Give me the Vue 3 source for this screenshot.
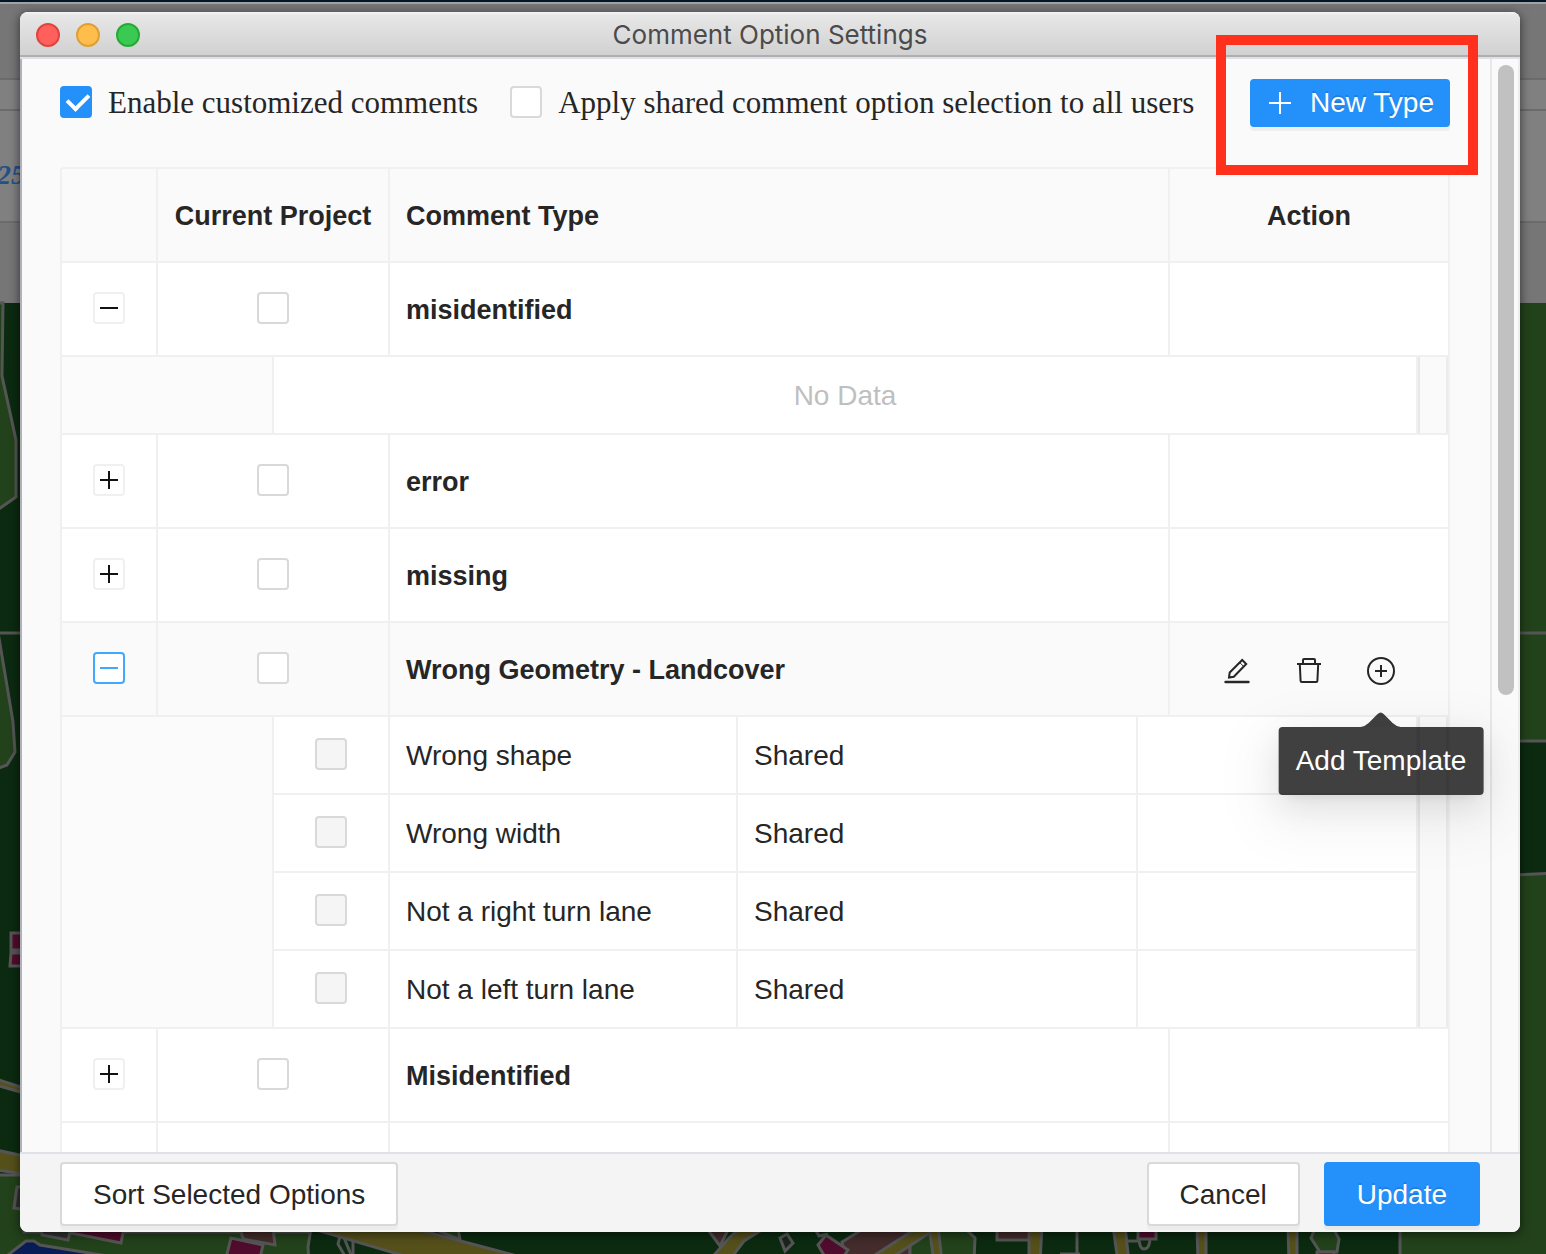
<script setup>
import { ref } from 'vue'

const enableCustom = ref(true)
const applyShared = ref(false)

const types = ref([
  { id: 1, name: 'misidentified', open: true, checked: false, templates: [] },
  { id: 2, name: 'error', open: false, checked: false, templates: [] },
  { id: 3, name: 'missing', open: false, checked: false, templates: [] },
  {
    id: 4,
    name: 'Wrong Geometry - Landcover',
    open: true,
    checked: false,
    active: true,
    templates: [
      { name: 'Wrong shape', scope: 'Shared' },
      { name: 'Wrong width', scope: 'Shared' },
      { name: 'Not a right turn lane', scope: 'Shared' },
      { name: 'Not a left turn lane', scope: 'Shared' }
    ]
  },
  { id: 5, name: 'Misidentified', open: false, checked: false, templates: [] },
  { id: 6, name: '', open: false, checked: false, templates: [] }
])
</script>

<template>
  <div class="desktop">
    <svg class="backdrop" viewBox="0 0 1546 1254" preserveAspectRatio="none" aria-hidden="true">
      <rect width="1546" height="1254" fill="#0b2a10" />
      <rect width="1546" height="303" fill="#767676" />
      <rect y="79" width="1546" height="143" fill="#808080" />
      <path d="M0 79h1546M0 110h1546M0 222h1546" stroke="#6b6b6b" stroke-width="2" />
      <rect width="1546" height="2" fill="#02152b" />
      <rect y="2" width="1546" height="2" fill="#a2a2a2" />
      <text x="-3" y="184" class="backdrop-text">25</text>
      <g stroke="#555" stroke-width="3">
        <path d="M-4 303H3L2 376L16 440V497L-4 511Z" fill="#22421b" />
        <path d="M-4 633H24" />
        <path d="M-4 620L13 722L15 752L7 765L-4 769Z" fill="#22421b" />
        <path d="M11 933H24V950H11ZM11 953H24V966H10Z" fill="#500c2c" />
        <path d="M-4 1079L24 1088V1093L-4 1085Z" fill="#55501a" />
        <path d="M-4 1150L24 1156V1174L-4 1170Z" fill="#55501a" />
        <path d="M-4 1175H24V1232H325L308 1262H-4Z" fill="#22421b" />
        <path d="M17 1187H26V1210L14 1208Z" fill="#303030" />
        <path d="M4 1258L26 1241H34L40 1245L120 1258Z" fill="#081d55" />
        <path d="M41 1228H71L68 1240L42 1235Z" fill="#303030" />
        <path d="M70 1228H124L121 1243L71 1233Z" fill="#500c2c" />
        <path d="M240 1228H273L275 1245L243 1239Z" fill="#432c2b" />
        <path d="M231 1238L263 1245L260 1258H226Z" fill="#500c2c" />
        <path d="M311 1228H340L354 1262H309L308 1247Z" fill="#0b2a10" />
        <path d="M340 1236L338 1244L346 1258M353 1240V1258M398 1252V1262" fill="none" />
        <path d="M432 1228H458L460 1240Z" fill="#22421b" />
        <path d="M310 1228L425 1262H540L412 1228Z" fill="#55501a" />
        <path d="M705 1226H730L720 1246Z" fill="#432c2b" />
        <path d="M729 1238L742 1226H768L744 1241L728 1262H708Z" fill="#55501a" />
        <path d="M780 1238L787 1234L793 1243L785 1251Z" fill="#1c2420" />
        <path d="M815 1229L819 1236L828 1234" fill="none" />
        <path d="M842 1242L868 1226H910V1262H846Z" fill="#432c2b" />
        <path d="M910 1226H962L975 1238L974 1262H910Z" fill="#22421b" />
        <path d="M818 1245L826 1235L848 1250L840 1262H828Z" fill="#500c2c" />
        <path d="M864 1262L920 1226H940L885 1262Z" fill="#55501a" />
        <path d="M929 1226H938L942 1262H934Z" fill="#55501a" />
        <path d="M997 1226H1030V1240H997Z" fill="#432c2b" />
        <path d="M1029 1226H1042L1040 1262H1029Z" fill="#55501a" />
        <path d="M1077 1226V1254M1060 1254H1080M1125 1241H1138M1139 1240Q1140 1249 1144 1249Q1149 1249 1150 1240" fill="none" />
        <path d="M1113 1226H1125L1129 1262H1118Z" fill="#55501a" />
        <path d="M1138 1226H1156V1239H1138Z" fill="#500c2c" />
        <path d="M1197 1226H1206V1262H1198Z" fill="#55501a" />
        <path d="M1288 1226H1297V1262H1289Z" fill="#55501a" />
        <path d="M1316 1226H1332L1339 1239L1337 1252H1320L1311 1238Z" fill="#22421b" />
        <path d="M1317 1252H1334V1262H1317Z" fill="#500c2c" />
        <path d="M1514 303H1554V741H1514Z" fill="#22421b" stroke="none" />
        <path d="M1514 633H1554M1514 741H1554" />
        <path d="M1400 1262V1226L1514 875L1554 873V1262Z" fill="#22421b" />
      </g>
    </svg>

    <section class="window" role="dialog" aria-labelledby="window-title">
      <header class="titlebar">
        <div class="lights">
          <button class="light close" type="button" aria-label="Close"></button>
          <button class="light minimize" type="button" aria-label="Minimize"></button>
          <button class="light zoom" type="button" aria-label="Zoom"></button>
        </div>
        <h1 id="window-title" class="title">Comment Option Settings</h1>
      </header>

      <div class="body">
        <main class="content">
          <div class="toolbar">
            <label class="option" for="enable">
              <input id="enable" v-model="enableCustom" class="check" type="checkbox" />
              <span>Enable customized comments</span>
            </label>
            <label class="option" for="apply">
              <input id="apply" v-model="applyShared" class="check" type="checkbox" />
              <span>Apply shared comment option selection to all users</span>
            </label>
            <button class="btn primary new-type" type="button">
              <svg width="28" height="28" viewBox="0 0 28 28" aria-hidden="true">
                <path d="M14 3v22M3 14h22" stroke="#fff" stroke-width="2" />
              </svg>
              <span>New Type</span>
            </button>
          </div>

          <table class="grid">
            <colgroup>
              <col class="col-expand" />
              <col class="col-project" />
              <col />
              <col class="col-action" />
            </colgroup>
            <thead>
              <tr>
                <th></th>
                <th class="center">Current Project</th>
                <th>Comment Type</th>
                <th class="center">Action</th>
              </tr>
            </thead>
            <tbody>
              <template v-for="t in types" :key="t.id">
                <tr :class="{ active: t.active }">
                  <td class="center">
                    <button
                      class="expander"
                      type="button"
                      :aria-expanded="t.open"
                      :aria-label="t.open ? 'Collapse' : 'Expand'"
                      @click="t.open = !t.open"
                    >
                      <svg width="28" height="28" viewBox="0 0 28 28" aria-hidden="true">
                        <path :d="t.open ? 'M5 14h18' : 'M5 14h18M14 5v18'" stroke="currentColor" stroke-width="2" />
                      </svg>
                    </button>
                  </td>
                  <td class="center">
                    <input v-model="t.checked" class="check" type="checkbox" :aria-label="t.name" />
                  </td>
                  <td class="name">{{ t.name }}</td>
                  <td>
                    <div v-if="t.active" class="actions">
                      <button class="icon-btn" type="button" aria-label="Edit">
                        <svg width="28" height="28" viewBox="0 0 28 28" fill="none" stroke="currentColor" stroke-width="2">
                          <path d="M2.500 25h23" stroke-width="2.400" stroke-linecap="round" />
                          <path d="M6 20.500L6.700 15.500L19.200 3L23.200 7L10.800 19.700Z" />
                          <path d="M16.700 5.500L20.700 9.500" stroke-width="1" />
                        </svg>
                      </button>
                      <button class="icon-btn" type="button" aria-label="Delete">
                        <svg width="28" height="28" viewBox="0 0 28 28" fill="none" stroke="currentColor" stroke-width="2">
                          <path d="M2 7h24" />
                          <path d="M8 7V3Q8 2 9 2H19Q20 2 20 3V7" />
                          <path d="M4.800 7L5.600 24Q5.700 25 6.700 25H21.300Q22.300 25 22.400 24L23.200 7" />
                        </svg>
                      </button>
                      <div class="tip-anchor">
                        <button class="icon-btn" type="button" aria-label="Add Template" aria-describedby="add-tip">
                          <svg width="28" height="28" viewBox="0 0 28 28" fill="none" stroke="currentColor" stroke-width="2">
                            <circle cx="14" cy="14" r="13" />
                            <path d="M14 8v12M8 14h12" />
                          </svg>
                        </button>
                        <div id="add-tip" class="tooltip" role="tooltip">
                          <svg class="tip-arrow" width="40" height="15" viewBox="0 0 40 15" aria-hidden="true">
                            <path d="M0 15Q5 14 8 11L17 2Q20-1 23 2L32 11Q35 14 40 15Z" fill="#000" fill-opacity=".75" />
                          </svg>
                          Add Template
                        </div>
                      </div>
                    </div>
                  </td>
                </tr>
                <tr v-if="t.open">
                  <td colspan="4" class="nest-cell">
                    <div class="nest">
                      <table class="nested">
                        <colgroup>
                          <col class="sub-check" />
                          <col class="sub-name" />
                          <col class="sub-scope" />
                          <col />
                        </colgroup>
                        <tbody>
                          <tr v-if="!t.templates.length">
                            <td colspan="4" class="empty">No Data</td>
                          </tr>
                          <tr v-for="s in t.templates" :key="s.name">
                            <td class="center">
                              <input class="check" type="checkbox" disabled :aria-label="s.name" />
                            </td>
                            <td>{{ s.name }}</td>
                            <td>{{ s.scope }}</td>
                            <td></td>
                          </tr>
                        </tbody>
                      </table>
                      <div class="gutter"></div>
                    </div>
                  </td>
                </tr>
              </template>
            </tbody>
          </table>
        </main>
        <div class="track" aria-hidden="true"><div class="thumb"></div></div>
      </div>

      <footer class="footer">
        <button class="btn" type="button">Sort Selected Options</button>
        <div class="footer-right">
          <button class="btn" type="button">Cancel</button>
          <button class="btn primary" type="button">Update</button>
        </div>
      </footer>

      <div class="highlight" aria-hidden="true"></div>
    </section>
  </div>
</template>

<style>
body {
  margin: 0;
}
</style>

<style scoped>
* {
  box-sizing: border-box;
}

.desktop {
  position: relative;
  display: flex;
  height: 100vh;
  padding: 12px 26px 22px 20px;
  overflow: hidden;
  font-family: "Helvetica Neue", "Liberation Sans", Arial, sans-serif;
  font-size: 28px;
  line-height: 44px;
  color: #262626;
}

.backdrop {
  position: absolute;
  inset: 0;
  width: 100%;
  height: 100%;
}

.backdrop-text {
  font: italic bold 28px "Liberation Serif", serif;
  fill: #24508a;
}

.window {
  position: relative;
  display: flex;
  flex: 1;
  flex-direction: column;
  min-width: 0;
  border-radius: 8px;
  background: #f4f4f4;
  box-shadow: 0 2px 10px 1px rgba(0, 0, 0, 0.5);
}

.titlebar {
  position: relative;
  display: flex;
  align-items: center;
  justify-content: center;
  height: 47px;
  border-bottom: 2px solid #dfdfe7;
  border-radius: 8px 8px 0 0;
  background: linear-gradient(#f5f5f5, #e7e7e7 3px, #d1d1d1 43px, #afafb1 43px);
}

.lights {
  position: absolute;
  left: 16px;
  display: flex;
  gap: 16px;
}

.light {
  width: 24px;
  height: 24px;
  padding: 0;
  border: 2px solid;
  border-radius: 50%;
}

.close {
  border-color: #e0443e;
  background: #ff605c;
}

.minimize {
  border-color: #dea034;
  background: #ffbd4c;
}

.zoom {
  border-color: #27aa35;
  background: #3ac953;
}

.title {
  margin: 0;
  font: 400 26px/44px Inter, sans-serif;
  color: #4b4b4b;
}

.body {
  display: flex;
  flex: 1;
  min-height: 0;
  overflow: hidden;
  border-right: 2px solid #ededf0;
  border-left: 2px solid #b0b0b9;
  background: #fafafa;
}

.content {
  flex: 1;
  min-width: 0;
  padding: 0 40px 0 38px;
}

.track {
  width: 28px;
  padding: 6px;
  border-left: 2px solid #e8e8e8;
}

.thumb {
  width: 16px;
  height: 630px;
  border-radius: 8px;
  background: #c1c1c1;
}

.toolbar {
  display: flex;
  align-items: center;
  gap: 32px;
  padding: 20px 0 40px;
}

.option {
  display: flex;
  align-items: center;
  gap: 16px;
  white-space: nowrap;
  font-family: Georgia, "Liberation Serif", serif;
  font-size: 31px;
}

.check {
  position: relative;
  display: block;
  flex: none;
  width: 32px;
  height: 32px;
  margin: 0;
  border: 2px solid #d9d9d9;
  border-radius: 4px;
  background: #fff;
  appearance: none;
}

.center > .check {
  margin: 0 auto;
}

.option > .check {
  margin-bottom: 2px;
}

.check:checked {
  border-color: #2490fa;
  background: #2490fa;
}

.check:checked::after {
  position: absolute;
  top: 3px;
  left: 9px;
  width: 10px;
  height: 17px;
  border: solid #fff;
  border-width: 0 4px 4px 0;
  content: "";
  transform: translateY(-2px) rotate(45deg);
}

.check:disabled {
  background: #f5f5f5;
}

.btn {
  height: 64px;
  padding: 2px 31px 0;
  border: 2px solid #d9d9d9;
  border-radius: 4px;
  background: #fff;
  box-shadow: 0 4px 0 rgba(0, 0, 0, 0.03);
  font: inherit;
  color: inherit;
  white-space: nowrap;
}

.primary {
  border-color: #2490fa;
  background: #2490fa;
  box-shadow: 0 4px 0 rgba(0, 0, 0, 0.045);
  color: #fff;
  text-shadow: 0 -2px 0 rgba(0, 0, 0, 0.12);
}

.new-type {
  display: flex;
  align-items: center;
  gap: 16px;
  height: 48px;
  margin-left: auto;
  padding: 0 14px;
}

.grid,
.nested {
  width: 100%;
  border-spacing: 0;
  table-layout: fixed;
}

.grid {
  border-top: 2px solid #f0f0f0;
  border-left: 2px solid #f0f0f0;
  border-radius: 4px 0 0;
}

.col-expand {
  width: 96px;
}

.col-project {
  width: 232px;
}

.col-action {
  width: 280px;
}

.sub-check {
  width: 116px;
}

.sub-name {
  width: 348px;
}

.sub-scope {
  width: 400px;
}

th,
td {
  height: 94px;
  padding: 2px 16px 0;
  border-right: 2px solid #f0f0f0;
  border-bottom: 2px solid #f0f0f0;
  background: #fff;
  text-align: left;
  white-space: nowrap;
}

th {
  background: #fafafa;
}

th,
.name {
  font-size: 27px;
  font-weight: 700;
}

.active td {
  background: #fafafa;
}

.center {
  text-align: center;
}

td.center {
  padding: 0 16px 2px;
}

.expander {
  display: block;
  width: 32px;
  height: 32px;
  margin: 0 auto;
  padding: 0;
  border: 2px solid #f0f0f0;
  border-radius: 4px;
  background: #fff;
  color: #111;
}

.expander svg,
.icon-btn svg {
  display: block;
}

.active .expander {
  border-color: #40a9ff;
  color: #40a9ff;
}

.actions {
  display: flex;
  justify-content: center;
  gap: 44px;
  padding-top: 2px;
}

.icon-btn {
  display: block;
  padding: 0;
  border: 0;
  background: none;
  color: #262626;
}

.tip-anchor {
  position: relative;
}

.tooltip {
  position: absolute;
  z-index: 2;
  top: calc(100% + 42px);
  left: 50%;
  padding: 12px 17px;
  border-radius: 4px;
  background: rgba(0, 0, 0, 0.75);
  box-shadow:
    0 6px 12px -8px rgba(0, 0, 0, 0.12),
    0 12px 32px rgba(0, 0, 0, 0.08),
    0 18px 56px 16px rgba(0, 0, 0, 0.05);
  color: #fff;
  transform: translateX(-50%);
}

.tip-arrow {
  position: absolute;
  bottom: 100%;
  left: calc(50% - 20px);
}

.nest-cell {
  height: auto;
  padding: 0 0 0 210px;
  background: #fbfbfb;
}

.nest {
  display: flex;
}

.nested {
  border-left: 2px solid #f0f0f0;
}

.nested td {
  height: 78px;
}

.nested tr:last-child td {
  height: 76px;
  border-bottom: 0;
}

.nested .empty {
  color: #bfbfbf;
  text-align: center;
}

.gutter {
  flex: none;
  width: 30px;
  border-right: 2px solid #ececec;
  border-left: 2px solid #e8e8e8;
  background: #fafafa;
}

.footer {
  position: relative;
  display: flex;
  align-items: center;
  justify-content: space-between;
  padding: 8px 40px 6px;
  border-top: 2px solid #dee2e6;
  border-radius: 0 0 8px 8px;
  background: #f4f4f4;
}

.footer-right {
  display: flex;
  gap: 24px;
}

.highlight {
  position: absolute;
  top: 23px;
  right: 42px;
  width: 262px;
  height: 140px;
  border: 10px solid #ff301c;
  pointer-events: none;
}
</style>
